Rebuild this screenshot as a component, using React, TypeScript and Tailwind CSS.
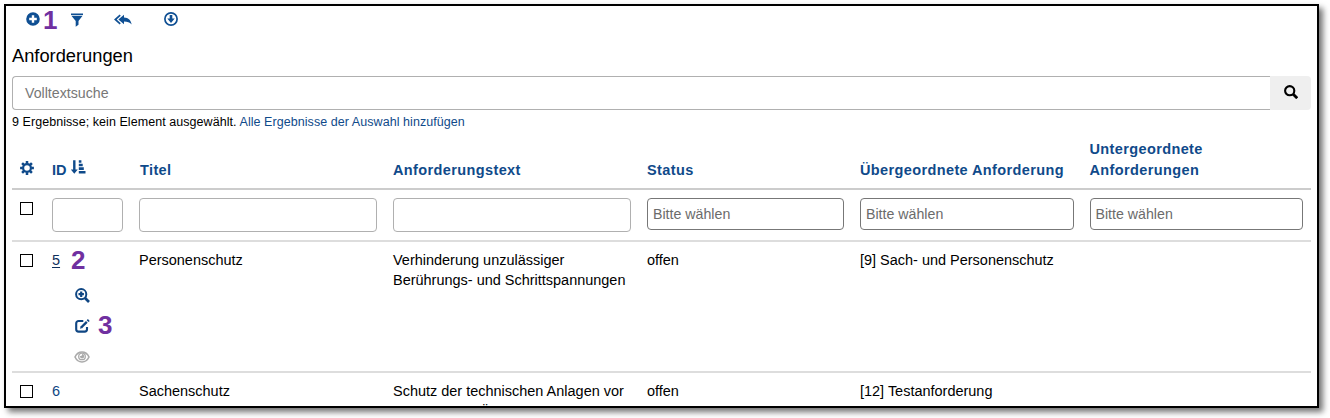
import React from "react";

type IconProps = { className?: string };

const PlusCircle = ({ className }: IconProps) => (
  <svg viewBox="0 0 14 14" className={className} fill="currentColor">
    <path fillRule="evenodd" d="M7 0.2a6.8 6.8 0 1 0 0 13.6A6.8 6.8 0 0 0 7 .2ZM5.8 3.2h2.4v2.6h2.6v2.4H8.2v2.6H5.8V8.2H3.2V5.8h2.6Z" />
  </svg>
);

const Filter = ({ className }: IconProps) => (
  <svg viewBox="0 0 14 14" className={className} fill="currentColor">
    <path d="M1 0.4h12v1.5H1ZM1.4 2.7h11.2L8.5 8v3.7L5.7 13.7V8Z" />
  </svg>
);

const ReplyAll = ({ className }: IconProps) => (
  <svg viewBox="0 0 18 12" className={className} fill="currentColor">
    <path d="M10 .800v2.700c4.500.2 7 2.800 7.600 7-2-2.300-4-3-7.600-3v2.700L4.400 5.500Z" />
    <path d="M6.200 1.100 1.300 5.500l4.900 4.400" fill="none" stroke="currentColor" strokeWidth="1.700" />
  </svg>
);

const DownloadCircle = ({ className }: IconProps) => (
  <svg viewBox="0 0 14 14" className={className} fill="currentColor">
    <circle cx="7" cy="7" r="6.100" fill="none" stroke="currentColor" strokeWidth="1.700" />
    <path d="M5.700 3h2.600v3.600h2.400L7 10.900 3.300 6.600h2.400Z" />
  </svg>
);

const Search = ({ className }: IconProps) => (
  <svg viewBox="0 0 14 14" className={className} fill="none" stroke="currentColor">
    <circle cx="5.700" cy="5.700" r="4.600" strokeWidth="2.100" />
    <path d="m9 9 4.200 4.200" strokeWidth="2.800" />
  </svg>
);

const ZoomIn = ({ className }: IconProps) => (
  <svg viewBox="0 0 15 15" className={className} fill="none" stroke="currentColor">
    <circle cx="6.200" cy="6.200" r="5.100" strokeWidth="2" />
    <path d="m10 10 4 4" strokeWidth="2.700" />
    <path d="M6.200 3.500v5.400M3.500 6.200h5.400" strokeWidth="2.200" />
  </svg>
);

const Edit = ({ className }: IconProps) => (
  <svg viewBox="0 0 15 14" className={className} fill="none" stroke="currentColor">
    <path d="M8.300 2H3.600A2.400 2.400 0 0 0 1.200 4.400v5.800a2.400 2.400 0 0 0 2.400 2.400h6a2.400 2.400 0 0 0 2.400-2.400V8" strokeWidth="2.100" />
    <path d="m6.200 8.500 5.600-5.600" strokeWidth="2.400" />
    <path d="m12.600 2.200 1.200-1.200" strokeWidth="2.600" />
    <path d="m4.900 9.800.9-2.500 1.700 1.700Z" fill="currentColor" stroke="none" />
  </svg>
);

const Eye = ({ className }: IconProps) => (
  <svg viewBox="0 0 16 12" className={className} fill="none" stroke="currentColor">
    <path d="M1 6C2.600 2.600 5 1 8 1s5.400 1.600 7 5c-1.600 3.400-4 5-7 5S2.600 9.400 1 6Z" strokeWidth="1.600" />
    <circle cx="8" cy="5.400" r="3.300" strokeWidth="1.300" />
    <path d="M5.800 5.300a2.200 2.200 0 1 0 2.200-2.300c.3 1.300-.8 2.300-2.200 2.300Z" fill="currentColor" stroke="none" />
  </svg>
);

const Gear = ({ className }: IconProps) => (
  <svg viewBox="0 0 14 14" className={className} fill="none" stroke="currentColor">
    <circle cx="7" cy="7" r="3.900" strokeWidth="2.200" />
    <path
      d="M7 .1v2.600M7 11.300v2.600M.1 7h2.600M11.300 7h2.600M2.100 2.100 4 4M10 10l1.900 1.900M2.100 11.900 4 10M10 4l1.900-1.900"
      strokeWidth="2.500"
    />
  </svg>
);

const SortAsc = ({ className }: IconProps) => (
  <svg viewBox="0 0 15 14" className={className} fill="currentColor">
    <path d="M2.100.2h2.400v9.200h2.300L3.300 13.800-.2 9.400h2.300ZM7.800.2h2.600v2.600H7.800ZM7.800 3.700h3.900v2.600H7.800ZM7.800 7.300h5v2.600h-5ZM7.800 10.900h6.700v2.600H7.800Z" />
  </svg>
);

const Box = () => <span className="block size-[13px] border border-black bg-white" />;

const COLS = "grid grid-cols-[32px_87px_254px_254px_213px_229.500px_229.500px]";

const TextFilter = () => (
  <div className="px-2">
    <div className="h-[34px] rounded-[4px] border border-[#b0b0b0]" />
  </div>
);

const SelectFilter = () => (
  <div className="px-2">
    <div className="flex h-[32px] items-center rounded-[4px] border border-[#777] pl-[5px] text-[14.200px] text-[#6b6b6b]">
      Bitte wählen
    </div>
  </div>
);

const Marker = ({ children }: { children: string }) => (
  <span className="-mt-[2px] text-[26px] leading-[26px] font-bold text-[#7030a0]">{children}</span>
);

export default function App() {
  return (
    <div className="h-[418px] w-[1330px] overflow-hidden bg-white p-1 font-['Liberation_Sans',Arial,sans-serif] text-[14.480px] leading-[20.500px] text-black">
      <div className="h-[404px] w-[1315px] border-2 border-black bg-white shadow-[4px_4px_6px_rgba(0,0,0,0.55)]">
        <div className="flex h-full flex-col overflow-hidden px-[6px]">
          <div className="flex h-[29px] shrink-0 items-center pl-[14px] text-[#0f4f93]">
            <PlusCircle className="mt-[-3px] size-[14px]" />
            <span className="ml-[2px] flex w-[28px] pl-px">
              <Marker>1</Marker>
            </span>
            <Filter className="mt-[-2px] size-[14px]" />
            <ReplyAll className="mt-[-2px] ml-[30px] h-[12px] w-[18px]" />
            <DownloadCircle className="mt-[-3px] ml-[32px] size-[14px]" />
          </div>
          <h1 className="h-[41px] shrink-0 pt-[9px] text-[18.300px] leading-[24px]">Anforderungen</h1>
          <div className="flex h-[34px] shrink-0">
            <div className="flex flex-1 items-center rounded-l-[4px] border border-r-0 border-[#b0b0b0] pl-3 text-[14.200px] text-[#777]">
              Volltextsuche
            </div>
            <div className="flex w-[41px] items-center justify-center rounded-r-[4px] bg-[#efefef] pb-[2px]">
              <Search className="size-[14px]" />
            </div>
          </div>
          <p className="h-[25px] shrink-0 pt-[2px] text-[12.500px] leading-[20px] tracking-[0.060px] whitespace-nowrap">
            9 Ergebnisse; kein Element ausgewählt.{" "}
            <span className="text-[#0f4a8a]">Alle Ergebnisse der Auswahl hinzufügen</span>
          </p>

          <div className={`${COLS} h-[55px] shrink-0 items-end border-b-2 border-[#ccc] pb-[8px] text-[14.500px] font-bold tracking-[0.380px] text-[#0f4a8a]`}>
            <div className="pb-[5px] pl-2">
              <Gear className="size-[14px]" />
            </div>
            <div className="flex items-center pl-2">
              <span className="tracking-normal">ID</span>
              <SortAsc className="mt-[-5px] ml-[4px] h-[14px] w-[15px]" />
            </div>
            <div className="pl-[9px]">Titel</div>
            <div className="pl-2">Anforderungstext</div>
            <div className="pl-2">Status</div>
            <div className="pl-2">Übergeordnete Anforderung</div>
            <div className="pl-2">
              Untergeordnete
              <br />
              Anforderungen
            </div>
          </div>

          <div className={`${COLS} h-[52px] shrink-0 border-b-2 border-[#ddd] pt-[8px]`}>
            <div className="pt-1 pl-2">
              <Box />
            </div>
            <TextFilter />
            <TextFilter />
            <TextFilter />
            <SelectFilter />
            <SelectFilter />
            <SelectFilter />
          </div>

          <div className={`${COLS} h-[131px] shrink-0 border-b-2 border-[#ddd] pt-[8px]`}>
            <div className="pt-1 pl-2">
              <Box />
            </div>
            <div className="flex flex-col pl-2">
              <div className="flex h-[21px] items-center">
                <span className="text-[#0f2f5c] underline underline-offset-2">5</span>
                <span className="ml-[11px] flex">
                  <Marker>2</Marker>
                </span>
              </div>
              <div className="mt-[9px] flex h-[30px] items-center pl-[23px] text-[#0f4683]">
                <ZoomIn className="size-[15px]" />
              </div>
              <div className="flex h-[31px] items-center pl-[23px] text-[#0f4683]">
                <Edit className="h-[14px] w-[15px]" />
                <span className="ml-[8px] flex">
                  <Marker>3</Marker>
                </span>
              </div>
              <div className="flex h-[31px] items-center pl-[22px] text-[#aaa]">
                <Eye className="h-[12px] w-[16px]" />
              </div>
            </div>
            <div className="pl-2">Personenschutz</div>
            <div className="pl-2 leading-[20px]">
              Verhinderung unzulässiger
              <br />
              Berührungs- und Schrittspannungen
            </div>
            <div className="pl-2">offen</div>
            <div className="pl-2">[9] Sach- und Personenschutz</div>
            <div />
          </div>

          <div className={`${COLS} h-[60px] shrink-0 pt-[8px]`}>
            <div className="pt-1 pl-2">
              <Box />
            </div>
            <div className="pl-2 text-[#0f4683]">6</div>
            <div className="pl-2">Sachenschutz</div>
            <div className="pl-2">
              Schutz der technischen Anlagen vor
              <br />
              <span className="pl-[87px]">Ü</span>
            </div>
            <div className="pl-2">offen</div>
            <div className="pl-2">[12] Testanforderung</div>
            <div />
          </div>
        </div>
      </div>
    </div>
  );
}
